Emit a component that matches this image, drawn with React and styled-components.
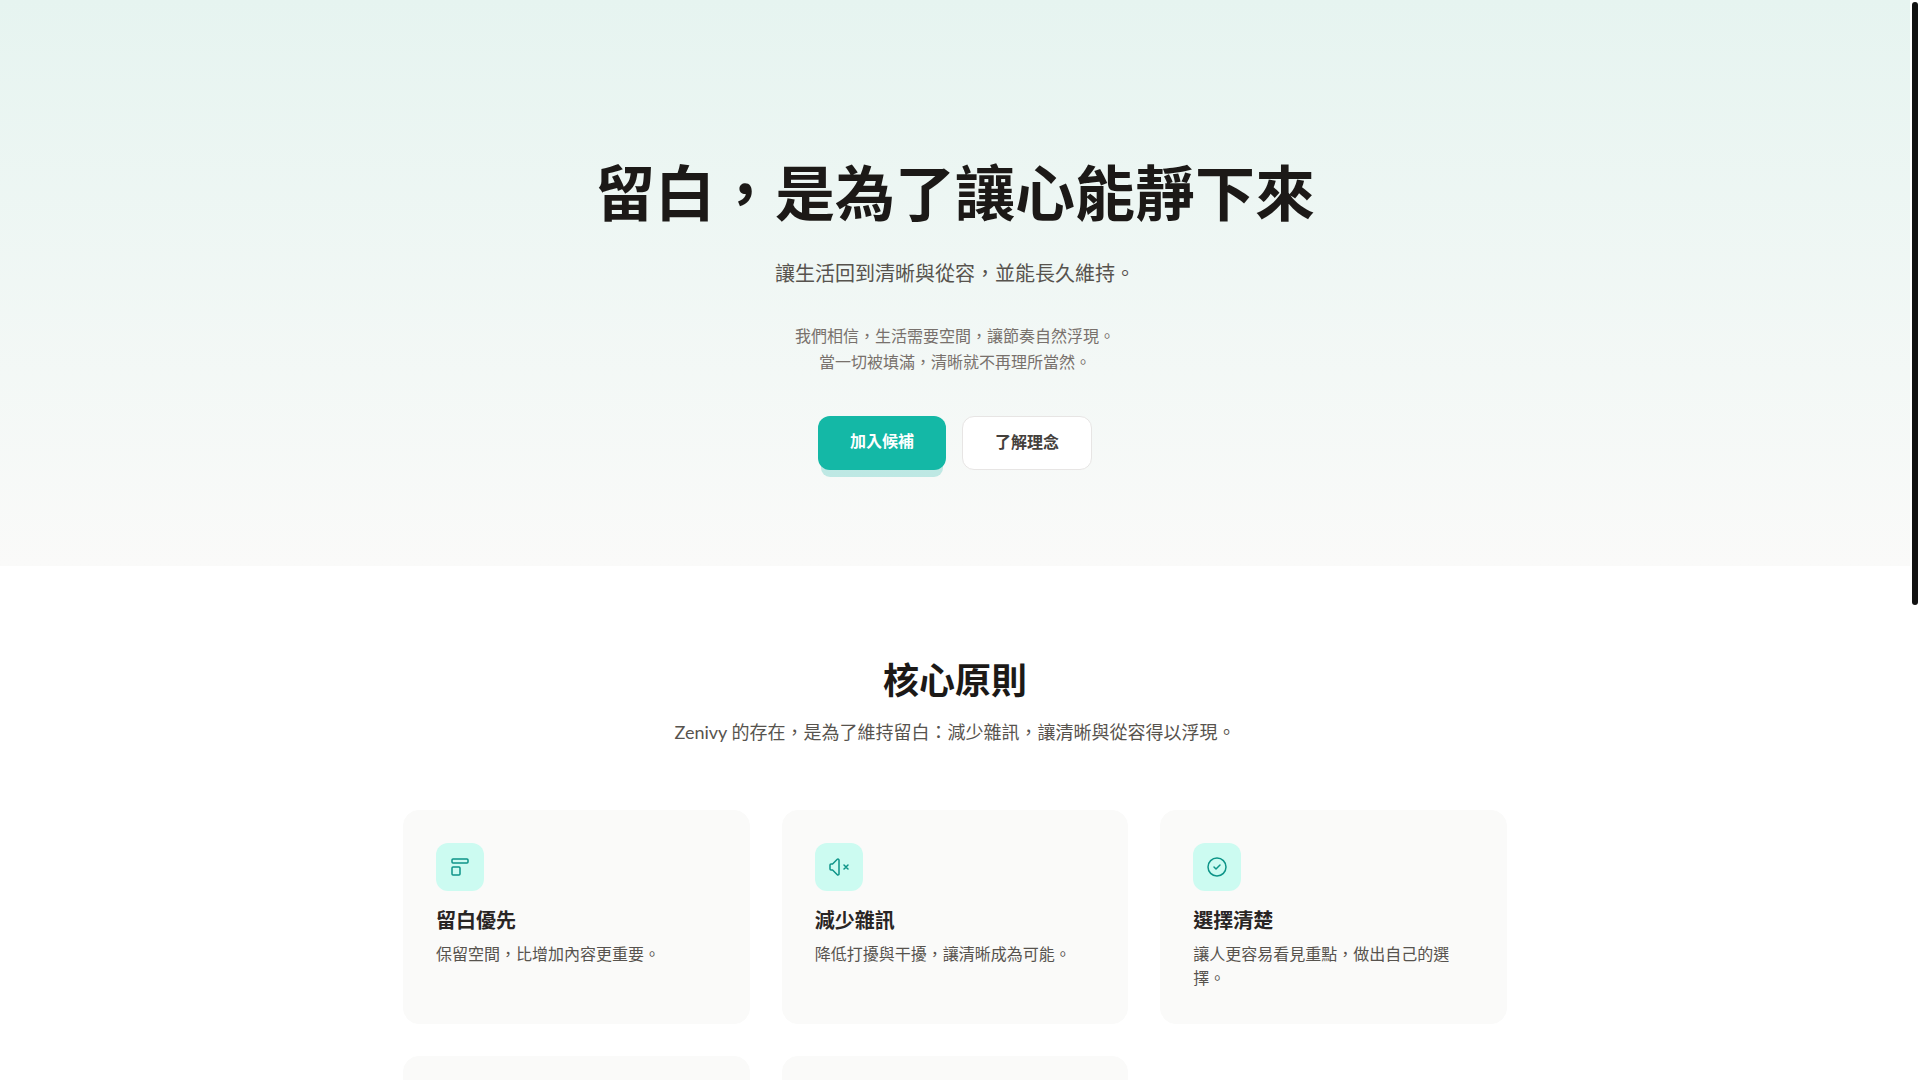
import React from 'react'
import styled, { createGlobalStyle } from "styled-components";


const principles = [
    {
        id: 1,
        title: "留白優先",
        text: "保留空間，比增加內容更重要。",
        paths: [
            "M4 5a1 1 0 011-1h14a1 1 0 011 1v2a1 1 0 01-1 1H5a1 1 0 01-1-1V5z",
            "M4 13a1 1 0 011-1h6a1 1 0 011 1v6a1 1 0 01-1 1H5a1 1 0 01-1-1v-6z",
        ],
    },
    {
        id: 2,
        title: "減少雜訊",
        text: "降低打擾與干擾，讓清晰成為可能。",
        paths: [
            "M5.586 15H4a1 1 0 01-1-1v-4a1 1 0 011-1h1.586l4.707-4.707C10.923 3.663 12 4.109 12 5v14c0 .891-1.077 1.337-1.707.707L5.586 15z",
            "M17 14l2-2m0 0l2-2m-2 2l-2-2m2 2l2 2",
        ],
    },
    {
        id: 3,
        title: "選擇清楚",
        text: "讓人更容易看見重點，做出自己的選擇。",
        paths: ["M9 12l2 2 4-4m6 2a9 9 0 11-18 0 9 9 0 0118 0z"],
    },
    { id: 4 },
    { id: 5 },
];

function PrincipleCard({ title, text, paths }) {
    return (
        <Card>
            {title && (
                <>
                    <IconTile>
                        <svg width="24" height="24" viewBox="0 0 24 24" fill="none" stroke="currentColor"
                            strokeWidth="1.5" strokeLinecap="round" strokeLinejoin="round" aria-hidden="true">
                            {paths.map((d) => <path key={d} d={d} />)}
                        </svg>
                    </IconTile>
                    <h3>{title}</h3>
                    <p>{text}</p>
                </>
            )}
        </Card>
    )
}

function App() {
    return (
        <Page>
            <GlobalStyle />
            <Content>
                <Hero>
                    <h1>留白，是為了讓心能靜下來</h1>
                    <Lead>讓生活回到清晰與從容，並能長久維持。</Lead>
                    <Belief>
                        我們相信，生活需要空間，讓節奏自然浮現。<br />
                        當一切被填滿，清晰就不再理所當然。
                    </Belief>
                    <Actions>
                        <PrimaryLink href="#waitlist">加入候補</PrimaryLink>
                        <SecondaryLink href="#principles">了解理念</SecondaryLink>
                    </Actions>
                </Hero>
                <Section id="principles">
                    <h2>核心原則</h2>
                    <Intro>Zenivy 的存在，是為了維持留白：減少雜訊，讓清晰與從容得以浮現。</Intro>
                    <Grid>
                        {principles.map((item) => <PrincipleCard key={item.id} {...item} />)}
                    </Grid>
                </Section>
            </Content>
            <Rail>
                <Thumb />
            </Rail>
        </Page>
    )
}

const GlobalStyle = createGlobalStyle`
    *{
        box-sizing: border-box;
    }
    body{
        margin: 0;
        background: white;
        color: #1c1917;
        font-family: Roboto, "Noto Sans CJK TC", sans-serif;
        font-size: 16px;
        line-height: 24px;
    }
    h1, h2, h3, p{
        margin: 0;
    }
`;

const Page = styled.div`
    display: flex;
    height: 100vh;
    overflow: hidden;
`;

const Content = styled.main`
    flex: 1;
    min-width: 0;
`;

const Rail = styled.div`
    width: 10px;
    padding: 2px;
`;

const Thumb = styled.div`
    height: 56%;
    border-radius: 4px;
    background: #111111;
`;

const Hero = styled.section`
    display: flex;
    flex-direction: column;
    align-items: center;
    padding: 160px 24px 96px;
    text-align: center;
    background: linear-gradient(to bottom, #e6f4f0, #fafaf9);
    h1{
        margin-bottom: 24px;
        font-size: 60px;
        font-weight: 700;
        line-height: 72px;
    }
`;

const Lead = styled.p`
    margin-bottom: 32px;
    color: #57534e;
    font-size: 20px;
    line-height: 36px;
`;

const Belief = styled.p`
    margin-bottom: 40px;
    color: #78716c;
    line-height: 26px;
`;

const Actions = styled.div`
    display: flex;
    gap: 16px;
`;

const PrimaryLink = styled.a`
    padding: 14px 32px;
    border-radius: 12px;
    background: #14b8a6;
    color: white;
    font-weight: 600;
    text-decoration: none;
    box-shadow: 0 10px 0 -3px rgba(20, 184, 166, 0.25);
`;

const SecondaryLink = styled(PrimaryLink)`
    border: 1px solid #e7e5e4;
    background: white;
    color: #44403c;
    box-shadow: none;
`;

const Section = styled.section`
    max-width: 1152px;
    margin: 0 auto;
    padding: 96px 24px;
    h2{
        margin-bottom: 16px;
        font-size: 36px;
        font-weight: 700;
        line-height: 40px;
        text-align: center;
    }
`;

const Intro = styled.p`
    margin-bottom: 64px;
    color: #57534e;
    font-family: Lato, "Noto Sans CJK TC", sans-serif;
    font-size: 18px;
    line-height: 28px;
    text-align: center;
`;

const Grid = styled.div`
    display: grid;
    grid-template-columns: repeat(3, 1fr);
    gap: 32px;
`;

const Card = styled.article`
    min-height: 214px;
    padding: 32px;
    border: 1px solid #fafaf9;
    border-radius: 16px;
    background: #fafaf9;
    h3{
        margin: 16px 0 8px;
        color: #292524;
        font-size: 20px;
        font-weight: 600;
        line-height: 28px;
    }
    p{
        color: #57534e;
    }
`;

const IconTile = styled.div`
    display: flex;
    align-items: center;
    justify-content: center;
    width: 48px;
    height: 48px;
    border-radius: 12px;
    background: #ccfbf1;
    color: #0d9488;
`;

export default App
